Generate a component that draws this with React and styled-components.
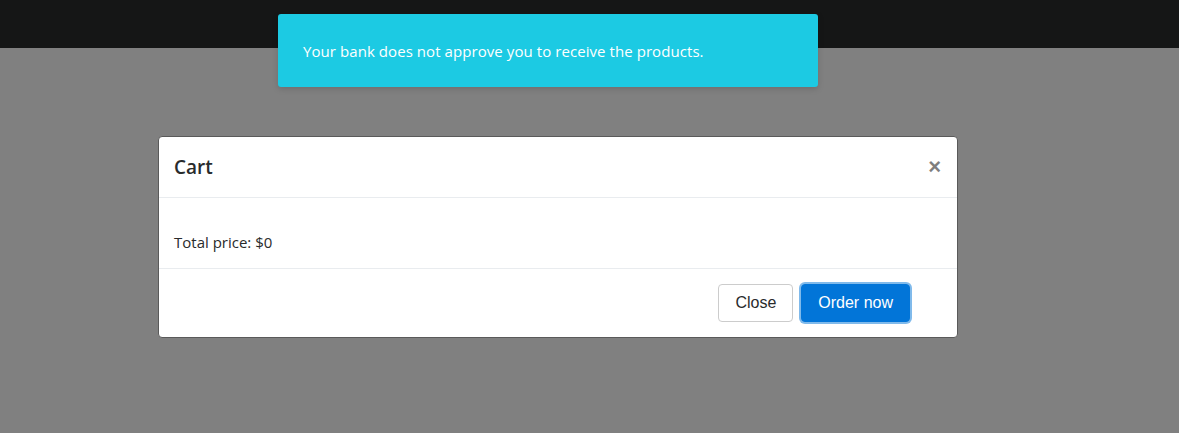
import React from "react";
import styled, { createGlobalStyle } from "styled-components";

const Global = createGlobalStyle`
  html, body { margin: 0; padding: 0; background: #808080; }
  body { font-family: "Open Sans", "Noto Sans", sans-serif; }
  #root { min-height: 433px; }
`;

const Page = styled.div`
  position: relative;
  width: 1179px;
  height: 433px;
  overflow: hidden;
  background: #808080;
`;

const TopBar = styled.div`
  height: 48px;
  background: #151616;
`;

const Overlay = styled.div`
  padding: 88px 0 0 158px;
`;

const Toast = styled.div`
  position: absolute;
  top: 14px;
  left: 278px;
  width: 540px;
  height: 73px;
  box-sizing: border-box;
  padding: 0 25px;
  display: flex;
  align-items: center;
  background: #1ccae3;
  border-radius: 3px;
  box-shadow: 0 2px 6px rgba(0, 0, 0, 0.15);
  color: #ffffff;
  font-family: "Open Sans", sans-serif;
  font-size: 15px;
  letter-spacing: 0.07px;
`;

const Modal = styled.div`
  width: 800px;
  height: 202px;
  box-sizing: border-box;
  background: #fff;
  border: 1px solid #5a5a5a;
  border-radius: 4px;
  display: flex;
  flex-direction: column;
`;

const Header = styled.div`
  height: 61px;
  box-sizing: border-box;
  padding: 0 14px 0 15px;
  display: flex;
  align-items: center;
  justify-content: space-between;
  border-bottom: 1px solid #e9ecef;
`;

const Title = styled.h5`
  margin: 0;
  font-family: "Open Sans", sans-serif;
  font-size: 19px;
  font-weight: 600;
  color: #292b2c;
`;

const CloseX = styled.button`
  border: 0;
  background: transparent;
  padding: 0;
  margin-right: 2px;
  font-family: "Liberation Sans", Arial, sans-serif;
  font-size: 22px;
  font-weight: 700;
  line-height: 1;
  color: #000;
  opacity: 0.5;
  cursor: pointer;
`;

const Body = styled.div`
  height: 71px;
  box-sizing: border-box;
  padding: 0 15px 16px;
  display: flex;
  align-items: flex-end;
  border-bottom: 1px solid #e9ecef;
  font-family: "Open Sans", sans-serif;
  font-size: 15px;
  color: #292b2c;
`;

const Footer = styled.div`
  flex: 1;
  display: flex;
  align-items: center;
  justify-content: flex-end;
  gap: 8px;
  padding: 0 47px 0 0;
`;

const Button = styled.button`
  height: 38px;
  padding: 0 16px;
  border-radius: 4px;
  font-family: "Liberation Sans", Arial, sans-serif;
  font-size: 16px;
  cursor: pointer;
  border: 1px solid ${(p) => (p.$primary ? "#0275d8" : "#cccccc")};
  background: ${(p) => (p.$primary ? "#0275d8" : "#ffffff")};
  color: ${(p) => (p.$primary ? "#ffffff" : "#292b2c")};
  box-shadow: ${(p) => (p.$primary ? "0 0 0 2px rgba(2, 117, 216, 0.5)" : "none")};
`;

export default function App() {
  return (
    <Page>
      <Global />
      <TopBar />
      <Overlay>
        <Modal>
          <Header>
            <Title>Cart</Title>
            <CloseX aria-label="Close">×</CloseX>
          </Header>
          <Body>Total price: $0</Body>
          <Footer>
            <Button>Close</Button>
            <Button $primary>Order now</Button>
          </Footer>
        </Modal>
      </Overlay>
      <Toast>Your bank does not approve you to receive the products.</Toast>
    </Page>
  );
}
